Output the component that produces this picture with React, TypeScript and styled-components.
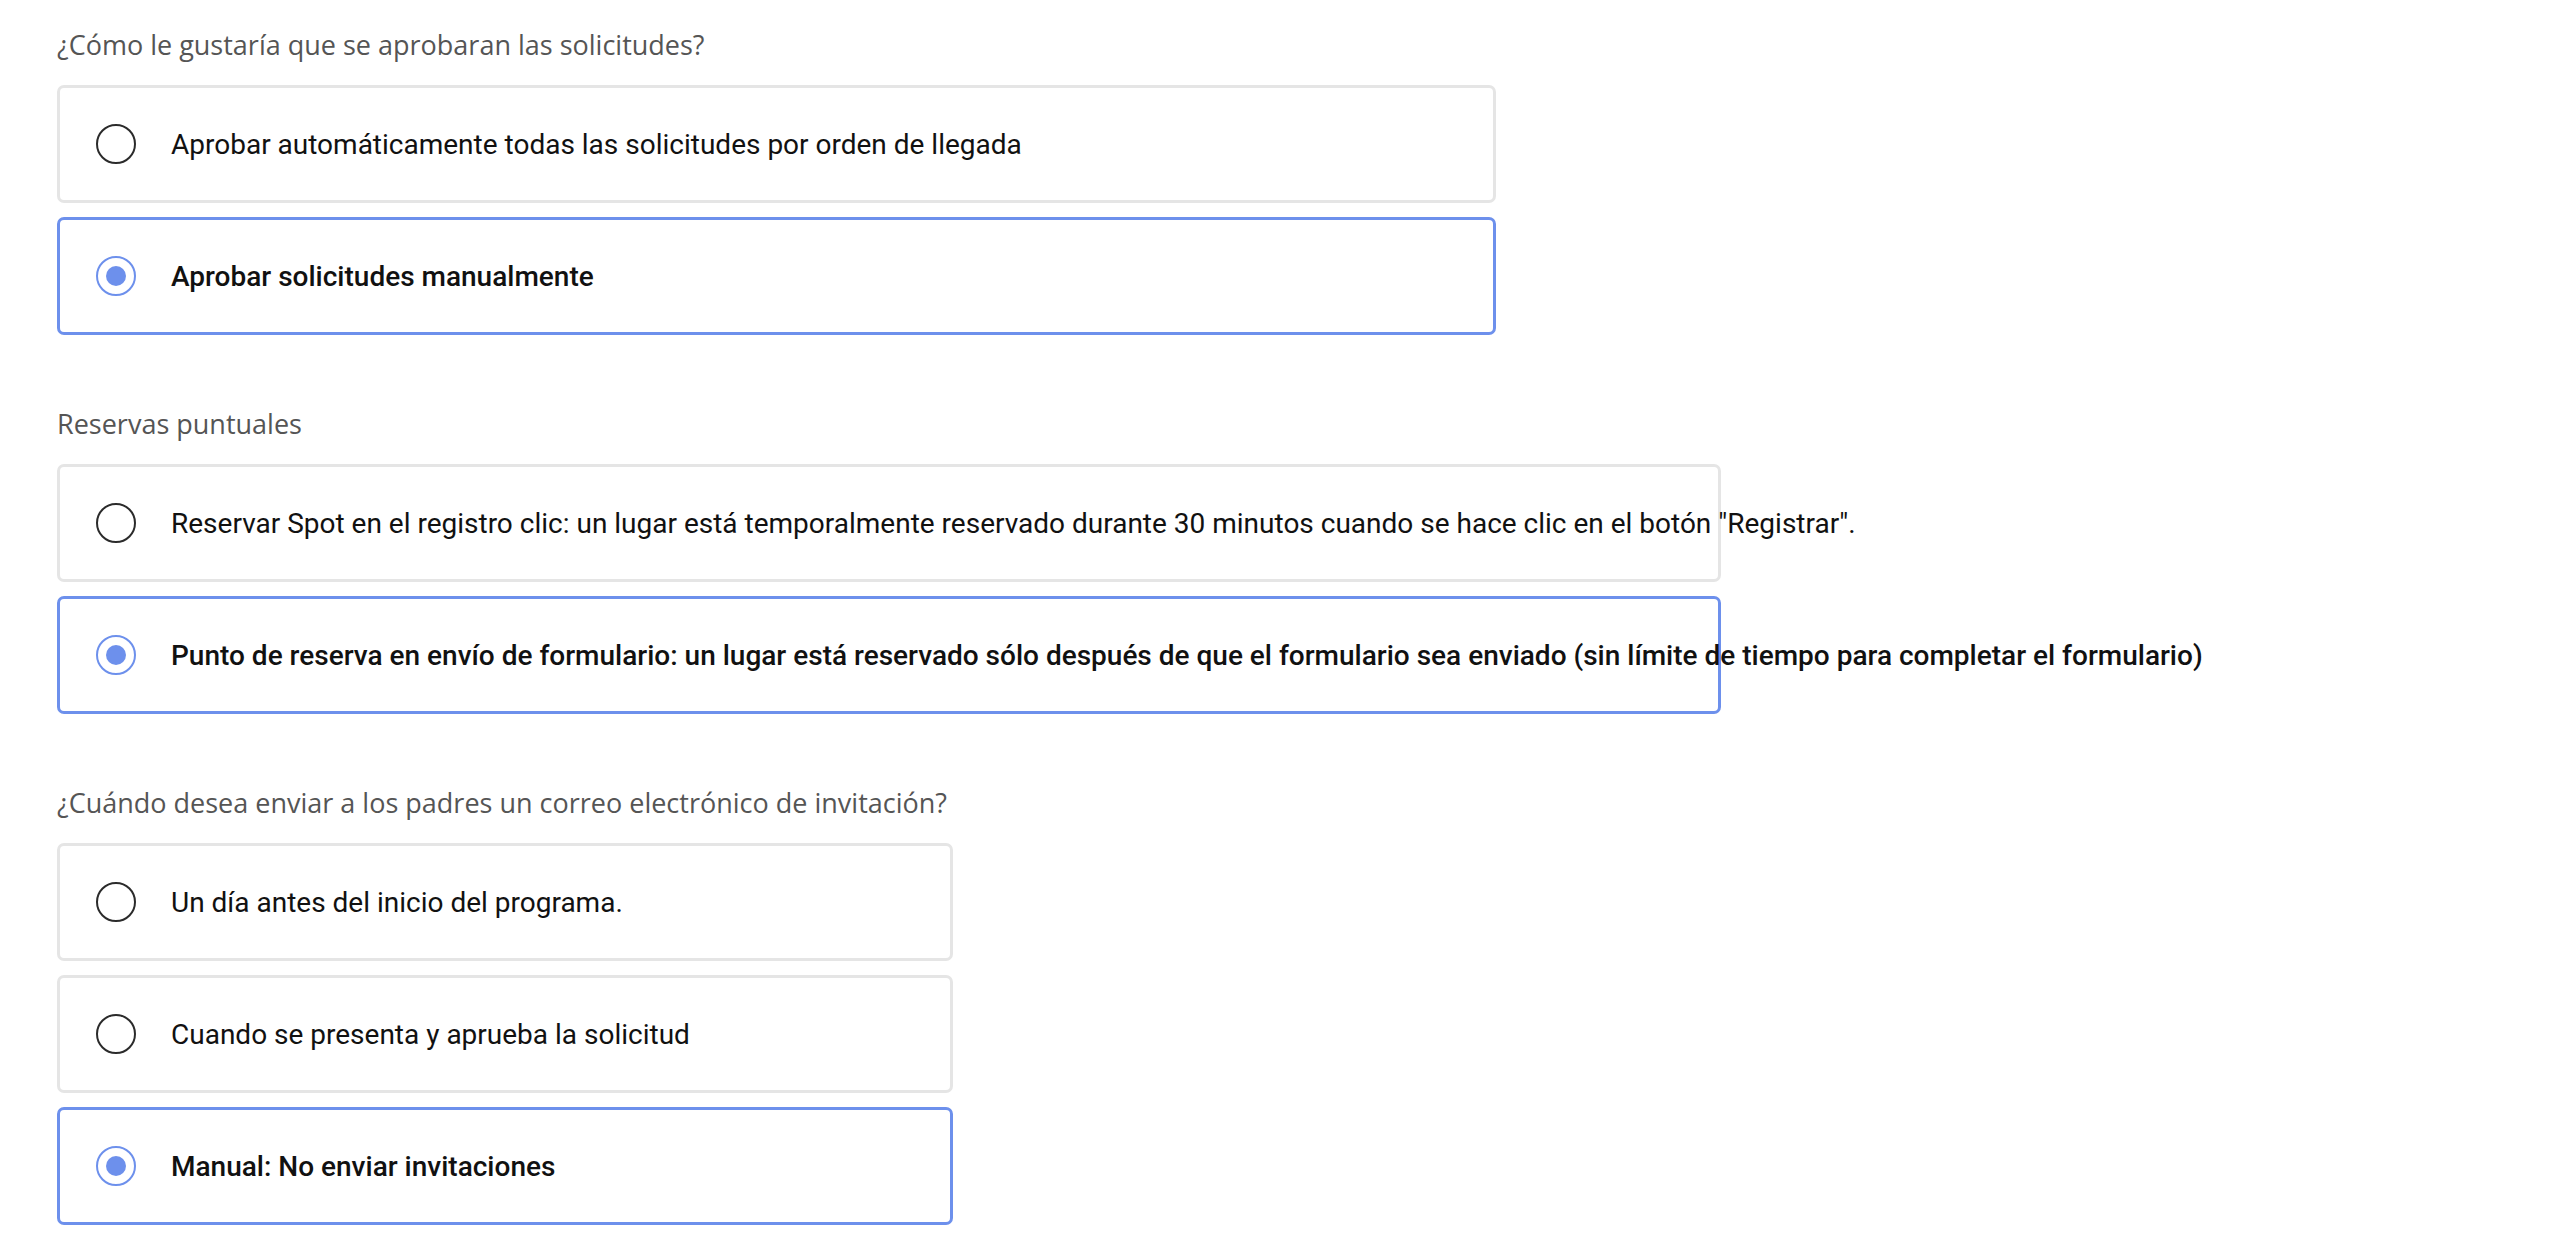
import React from "react";
import styled, { createGlobalStyle } from "styled-components";

const GlobalStyle = createGlobalStyle`
  * { box-sizing: border-box; }
  body {
    margin: 0;
    background: #ffffff;
    font-family: Roboto, "Liberation Sans", Arial, sans-serif;
  }
`;

type Option = { label: string; checked?: boolean };
type Section = { title: string; width: number; options: Option[] };

const sections: Section[] = [
  {
    title: "¿Cómo le gustaría que se aprobaran las solicitudes?",
    width: 1439,
    options: [
      { label: "Aprobar automáticamente todas las solicitudes por orden de llegada" },
      { label: "Aprobar solicitudes manualmente", checked: true },
    ],
  },
  {
    title: "Reservas puntuales",
    width: 1664,
    options: [
      {
        label:
          'Reservar Spot en el registro clic: un lugar está temporalmente reservado durante 30 minutos cuando se hace clic en el botón "Registrar".',
      },
      {
        label:
          "Punto de reserva en envío de formulario: un lugar está reservado sólo después de que el formulario sea enviado (sin límite de tiempo para completar el formulario)",
        checked: true,
      },
    ],
  },
  {
    title: "¿Cuándo desea enviar a los padres un correo electrónico de invitación?",
    width: 896,
    options: [
      { label: "Un día antes del inicio del programa." },
      { label: "Cuando se presenta y aprueba la solicitud" },
      { label: "Manual: No enviar invitaciones", checked: true },
    ],
  },
];

const App = () => {
  return (
    <Page>
      <GlobalStyle />
      {sections.map((s) => (
        <Group key={s.title}>
          <Question>{s.title}</Question>
          <OptionList>
            {s.options.map((o) => (
              <Card key={o.label} $width={s.width} $checked={!!o.checked}>
                <Radio $checked={!!o.checked} />
                <Label $checked={!!o.checked}>{o.label}</Label>
              </Card>
            ))}
          </OptionList>
        </Group>
      ))}
    </Page>
  );
};

export default App;

const Page = styled.div`
  display: flex;
  flex-direction: column;
  gap: 74px;
  padding: 30px 0 0 57px;
`;

const Group = styled.div`
  display: flex;
  flex-direction: column;
  gap: 25px;
`;

const Question = styled.div`
  font-family: "Open Sans", Lato, sans-serif;
  font-size: 27px;
  line-height: 30px;
  color: #555555;
`;

const OptionList = styled.div`
  display: flex;
  flex-direction: column;
  gap: 14px;
`;

const Card = styled.div<{ $width: number; $checked: boolean }>`
  width: ${({ $width }) => $width}px;
  height: 118px;
  display: flex;
  align-items: center;
  gap: 35px;
  padding-left: 36px;
  border: 3px solid ${({ $checked }) => ($checked ? "#6d90ec" : "#e5e5e5")};
  border-radius: 7px;
  background: #ffffff;
`;

const Radio = styled.span<{ $checked: boolean }>`
  flex: none;
  width: 40px;
  height: 40px;
  border-radius: 50%;
  border: 2px solid ${({ $checked }) => ($checked ? "#6d90ec" : "#2b2b2b")};
  display: flex;
  align-items: center;
  justify-content: center;
  &::after {
    content: "";
    display: ${({ $checked }) => ($checked ? "block" : "none")};
    width: 20px;
    height: 20px;
    border-radius: 50%;
    background: #6d90ec;
  }
`;

const Label = styled.span<{ $checked: boolean }>`
  font-size: 28px;
  font-weight: ${({ $checked }) => ($checked ? 500 : 400)};
  color: #111111;
  white-space: nowrap;
`;
